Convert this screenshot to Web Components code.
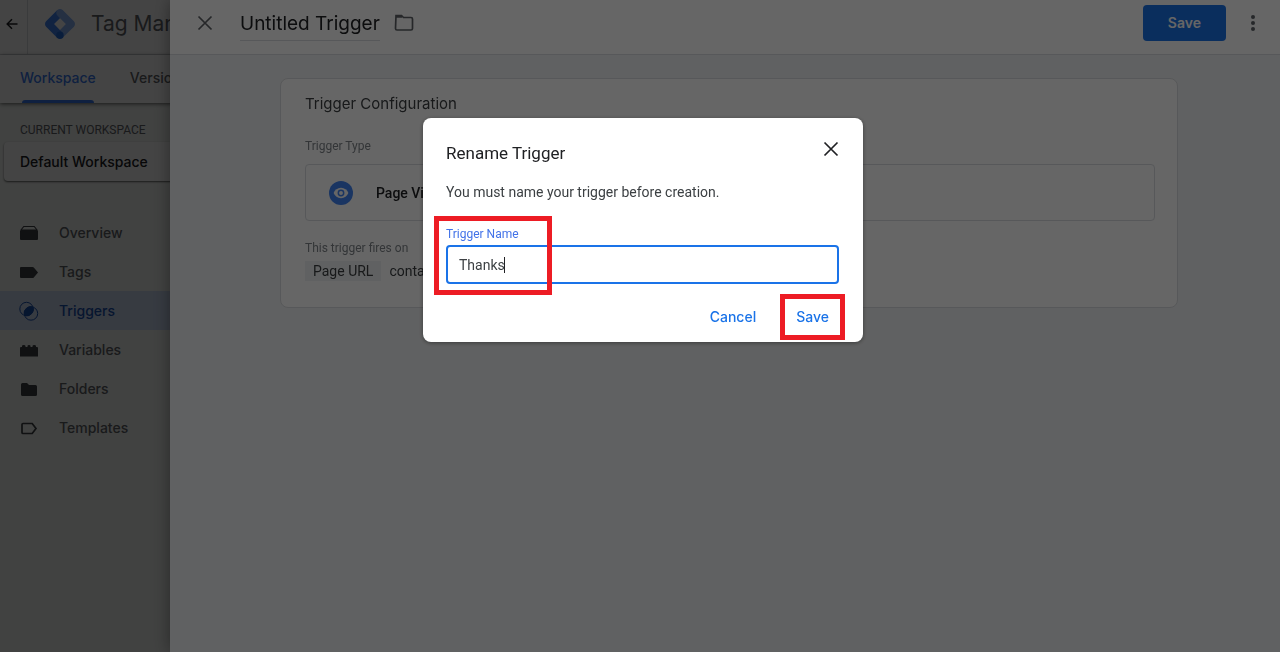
<!DOCTYPE html>
<html lang="en">
<head>
<meta charset="utf-8">
<meta name="viewport" content="width=device-width, initial-scale=1">
<title>Tag Manager</title>
<style>
    html, body {
        margin: 0;
        height: 100%;
        overflow: hidden;
        font-family: Roboto, "Liberation Sans", sans-serif;
        font-size: 14px;
        color: #202124;
        --brand-font: Inter, Roboto, sans-serif;
        --blue: #1a73e8;
        --grey: #5f6368;
    }
</style>
</head>
<body>
<tag-manager></tag-manager>

<script>
const define = (name, markup) => {
	const template = document.createElement("template");
	template.innerHTML = markup;

	customElements.define(
		name,
		class extends HTMLElement {
			constructor() {
				super();
				this.attachShadow({ mode: "open" });
				this.shadowRoot.append(template.content.cloneNode(true));
			}
		}
	);
};

define("close-icon", `
<style>
    :host { display: block; }
    svg { display: block; }
</style>
<svg width="16" height="16" viewBox="0 0 16 16" fill="none" stroke="currentColor" stroke-width="1.7">
    <path d="M1.5 1.5l13 13M14.5 1.5l-13 13" />
</svg>
`);

// red outline drawn round its nearest positioned ancestor
define("red-frame", `
<style>
    :host {
        display: block;
        position: absolute;
        box-sizing: border-box;
        border: 5px solid #ed1c24;
        pointer-events: none;
    }
</style>
`);

define("nav-item", `
<style>
    :host { display: block; }
    a {
        display: flex;
        align-items: center;
        gap: 20px;
        height: 39px;
        padding-left: 19px;
        color: var(--grey);
        font: 500 14px/20px var(--brand-font);
        text-decoration: none;
    }
    :host([active]) a {
        background: #cddbf5;
        color: #1a52b0;
    }
    ::slotted(svg) { display: block; }
</style>
<a href="#"><slot name="icon"></slot><slot></slot></a>
`);

define("app-header", `
<style>
    :host {
        display: flex;
        align-items: center;
        height: 54px;
        background: white;
        border-bottom: 1px solid #dadce0;
    }
    button {
        display: flex;
        align-items: center;
        justify-content: flex-start;
        align-self: stretch;
        width: 28px;
        padding: 0 0 6px 6px;
        border: 0;
        border-right: 1px solid #dadce0;
        background: none;
        color: #202124;
    }
    .logo { margin: 0 16px 6px 17px; }
    span {
        padding-bottom: 6px;
        color: var(--grey);
        font: 21px/28px var(--brand-font);
    }
</style>
<button aria-label="Back">
    <svg width="12" height="12" viewBox="0 0 12 12" fill="none" stroke="currentColor" stroke-width="1.5">
        <path d="M11.5 6H1.5M6 1.2L1.2 6 6 10.8" />
    </svg>
</button>
<svg class="logo" width="30" height="30" viewBox="0 0 2470 2470">
    <path fill="#8ab4f8" d="M1449.800 2376L1021 1946.700l921.100-930.500 436.700 436.600z" />
    <path fill="#4285f4" d="M1452.900 527.100L1016.300 90.400 90.500 1016.200c-120.600 120.500-120.700 315.800-.2 436.400l.2.2 925.800 925.800 428.300-430.300L745 1235.200z" />
    <path fill="#8ab4f8" d="M2378.700 1016.200L1452.900 90.400c-120.600-120.600-316.100-120.600-436.700 0s-120.600 316.100 0 436.600l926.300 925.800c120.600 120.600 316.100 120.600 436.600 0s120.600-316.100-.4-436.600z" />
    <circle fill="#246fdb" cx="1231" cy="2164" r="306" />
</svg>
<span>Tag Manager</span>
`);

define("app-tabs", `
<style>
    :host {
        display: flex;
        gap: 34px;
        height: 48px;
        padding-left: 20px;
        background: white;
        box-shadow: 0 1px 4px rgba(0, 0, 0, 0.6);
        position: relative;
    }
    a {
        display: grid;
        grid-template-rows: 45px 3px;
        align-items: center;
        color: var(--grey);
        font: 500 14px/20px var(--brand-font);
        text-decoration: none;
    }
    .current { color: #3b7bf0; }
    .current::after {
        content: "";
        height: 3px;
        margin: 0 2px;
        border-radius: 3px 3px 0 0;
        background: #3b7bf0;
    }
</style>
<a class="current" href="#">Workspace</a>
<a href="#">Versions</a>
`);

define("app-sidebar", `
<style>
    :host {
        display: block;
        width: 256px;
        padding-top: 19px;
    }
    h2 {
        margin: 0;
        padding: 0 0 4px 20px;
        color: var(--grey);
        font: 12px/16px Roboto, sans-serif;
        text-transform: uppercase;
    }
    button {
        display: block;
        width: 100%;
        height: 39px;
        margin-left: 4px;
        padding: 0 0 0 16px;
        border: 0;
        border-radius: 4px;
        background: white;
        box-shadow: 0 1px 2px rgba(0, 0, 0, 0.6);
        color: #202124;
        font: 500 14px/20px var(--brand-font);
        text-align: left;
    }
    nav { margin-top: 32px; }
</style>
<h2>Current Workspace</h2>
<button>Default Workspace</button>
<nav>
    <nav-item>
        <svg slot="icon" width="20" height="20" viewBox="0 0 20 20" fill="#3c4043">
            <path d="M4.500 3h11l3.200 4v1H1.300V7zM5 4L3 6.500h14L15 4z" fill-rule="evenodd" />
            <path d="M1 8h18v8a1 1 0 0 1-1 1H2a1 1 0 0 1-1-1z" />
        </svg>Overview
    </nav-item>
    <nav-item>
        <svg slot="icon" width="20" height="20" viewBox="0 0 20 20" fill="#3c4043">
            <path d="M2 5h11.500q.8 0 1.300.6L19 10.500l-4.200 4.900q-.5.600-1.300.6H2a1 1 0 0 1-1-1V6a1 1 0 0 1 1-1z" />
        </svg>Tags
    </nav-item>
    <nav-item active>
        <svg slot="icon" width="20" height="20" viewBox="0 0 20 20" fill="none" stroke="#1a52b0">
            <circle cx="7.500" cy="8" r="6.700" />
            <circle cx="12" cy="12.500" r="6.700" />
            <path fill="#1a52b0" d="M14 6A6.700 6.700 0 0 1 5.500 14.500 6.700 6.700 0 0 1 14 6z" />
        </svg>Triggers
    </nav-item>
    <nav-item>
        <svg slot="icon" width="20" height="20" viewBox="0 0 20 20" fill="#3c4043">
            <path d="M1 8q0-1 1-1h1V6q0-1 1.700-1T6.500 6v1h2V6q0-1 1.500-1t1.500 1v1h2V6q0-1 1.700-1T17 6v1h1q1 0 1 1v8.500H1z" />
        </svg>Variables
    </nav-item>
    <nav-item>
        <svg slot="icon" width="20" height="20" viewBox="0 0 20 20" fill="#3c4043">
            <path d="M3.500 4H8l2 2h6.500q1.500 0 1.500 1.500v8q0 1.500-1.500 1.500h-13Q2 17 2 15.500v-10Q2 4 3.500 4z" />
        </svg>Folders
    </nav-item>
    <nav-item>
        <svg slot="icon" width="20" height="20" viewBox="0 0 20 20" fill="none" stroke="#3c4043" stroke-width="1.700">
            <path d="M4 5.500h9.200L17 10.500l-3.800 5H4q-1 0-1-1v-8q0-1 1-1z" />
        </svg>Templates
    </nav-item>
</nav>
`);

define("trigger-card", `
<style>
    :host {
        display: block;
        padding: 14px 22px 26px 24px;
        border: 1px solid #dadce0;
        border-radius: 8px;
        background: white;
    }
    h2 {
        margin: 0 0 22px;
        color: #3c4043;
        font: 15px/22px var(--brand-font);
    }
    h3 {
        margin: 0;
        color: #80868b;
        font: 12px/18px Roboto, sans-serif;
    }
    .type {
        display: flex;
        align-items: center;
        gap: 23px;
        box-sizing: border-box;
        width: 100%;
        height: 57px;
        margin: 9px 0 18px;
        padding: 0 23px;
        border: 1px solid #dadce0;
        border-radius: 4px;
        background: none;
        color: #202124;
        font: 500 14px/20px Roboto, sans-serif;
    }
    .condition {
        display: flex;
        align-items: center;
        gap: 8px;
        margin-top: 4px;
        line-height: 20px;
        color: #3c4043;
    }
    .variable {
        padding: 0 8px;
        background: #f1f3f4;
    }
</style>
<h2>Trigger Configuration</h2>
<h3>Trigger Type</h3>
<button class="type">
    <svg width="24" height="24" viewBox="0 0 24 24">
        <circle cx="12" cy="12" r="12" fill="#4285f4" />
        <path fill="white" d="M12 6.800c3.400 0 6.200 2.100 7.400 5.200-1.200 3.100-4 5.200-7.400 5.200S5.800 15.100 4.600 12C5.800 8.900 8.600 6.800 12 6.800z" />
        <circle cx="12" cy="12" r="2.700" fill="white" stroke="#4285f4" stroke-width="1.500" />
    </svg>
    Page View
</button>
<h3>This trigger fires on</h3>
<div class="condition"><span class="variable">Page URL</span><span>contains</span></div>
`);

define("trigger-panel", `
<style>
    :host {
        display: block;
        background: #f1f3f4;
        box-shadow: 0 0 16px rgba(0, 0, 0, 0.4);
    }
    header {
        display: flex;
        align-items: center;
        box-sizing: border-box;
        height: 55px;
        padding: 0 20px 8px 27px;
        border-bottom: 1px solid #dadce0;
        background: white;
    }
    button {
        display: block;
        padding: 0;
        border: 0;
        background: none;
        color: var(--grey);
    }
    h1 {
        margin: 2px 14px 0 27px;
        border-bottom: 1px solid #dadce0;
        color: #202124;
        font: 19px/33px var(--brand-font);
    }
    svg { display: block; }
    .save {
        height: 36px;
        margin: 0 20px 0 auto;
        padding: 0 25px;
        border-radius: 4px;
        background: var(--blue);
        color: white;
        font: 600 14px/20px var(--brand-font);
    }
    main { padding: 23px 102px 0 110px; }
</style>
<header>
    <button aria-label="Close"><close-icon></close-icon></button>
    <h1>Untitled Trigger</h1>
    <button aria-label="Choose folder">
        <svg width="20" height="18" viewBox="0 0 20 18" fill="none" stroke="currentColor" stroke-width="1.700">
            <path d="M2 1.500h5.500l2 2H17q1.500 0 1.500 1.500v9.500q0 1.500-1.500 1.500H3q-1.500 0-1.500-1.500z" />
            <path d="M2 2.500h6" stroke-width="2.500" />
        </svg>
    </button>
    <button class="save">Save</button>
    <button aria-label="More actions">
        <svg width="14" height="18" viewBox="0 0 14 18" fill="currentColor">
            <circle cx="7" cy="3" r="2" /><circle cx="7" cy="9" r="2" /><circle cx="7" cy="15" r="2" />
        </svg>
    </button>
</header>
<main><trigger-card></trigger-card></main>
`);

define("rename-dialog", `
<style>
    :host {
        display: block;
        box-sizing: border-box;
        width: 440px;
        padding: 21px 18px 7px 23px;
        border-radius: 8px;
        background: white;
        box-shadow: 0 1px 4px rgba(0, 0, 0, 0.4);
    }
    header {
        display: flex;
        justify-content: space-between;
        padding-right: 6px;
    }
    h2 {
        margin: 0;
        font: 400 17px/28px Roboto, sans-serif;
    }
    p {
        margin: 14px 0 23px;
        color: #3c4043;
        line-height: 22px;
    }
    button {
        padding: 0;
        border: 0;
        background: none;
        color: #202124;
    }
    header button { height: 20px; }
    .field {
        display: flex;
        flex-direction: column;
        gap: 3px;
        position: relative;
        margin-right: 6px;
    }
    label {
        color: #4272e8;
        font-size: 12px;
        line-height: 16px;
    }
    input {
        box-sizing: border-box;
        width: 100%;
        height: 39px;
        padding: 0 11px;
        border: 2px solid var(--blue);
        border-radius: 4px;
        color: #3c4043;
        font: 14px/20px Roboto, sans-serif;
        outline: none;
    }
    .caret {
        position: absolute;
        left: 58px;
        bottom: 11px;
        width: 1px;
        height: 16px;
        background: #202124;
    }
    .field red-frame {
        left: -12px;
        top: -10px;
        bottom: -11px;
        width: 118px;
    }
    footer {
        display: flex;
        justify-content: flex-end;
        gap: 8px;
        margin-top: 15px;
    }
    footer button {
        position: relative;
        height: 36px;
        padding: 0 16px;
        color: var(--blue);
        font: 500 14px/20px var(--brand-font);
    }
    footer red-frame { inset: -5px 0; }
</style>
<header>
    <h2>Rename Trigger</h2>
    <button aria-label="Close"><close-icon></close-icon></button>
</header>
<p>You must name your trigger before creation.</p>
<div class="field">
    <label for="name">Trigger Name</label>
    <input id="name" type="text" value="Thanks">
    <span class="caret"></span>
    <red-frame></red-frame>
</div>
<footer>
    <button>Cancel</button>
    <button>Save<red-frame></red-frame></button>
</footer>
`);

define("tag-manager", `
<style>
    :host {
        display: block;
        min-height: 100vh;
        background: #f3f6f3;
    }
    .scrim {
        position: fixed;
        inset: 0;
        background: rgba(0, 0, 0, 0.33);
    }
    trigger-panel {
        position: fixed;
        inset: 0 0 0 170px;
    }
    .modal {
        display: flex;
        justify-content: center;
        align-items: flex-start;
        box-sizing: border-box;
        padding: 118px 0 0 6px;
        background: rgba(0, 0, 0, 0.6);
    }
</style>
<app-header></app-header>
<app-tabs></app-tabs>
<app-sidebar></app-sidebar>
<div class="scrim"></div>
<trigger-panel></trigger-panel>
<div class="scrim modal"><rename-dialog role="dialog" aria-label="Rename Trigger"></rename-dialog></div>
`);
</script>
</body>
</html>
